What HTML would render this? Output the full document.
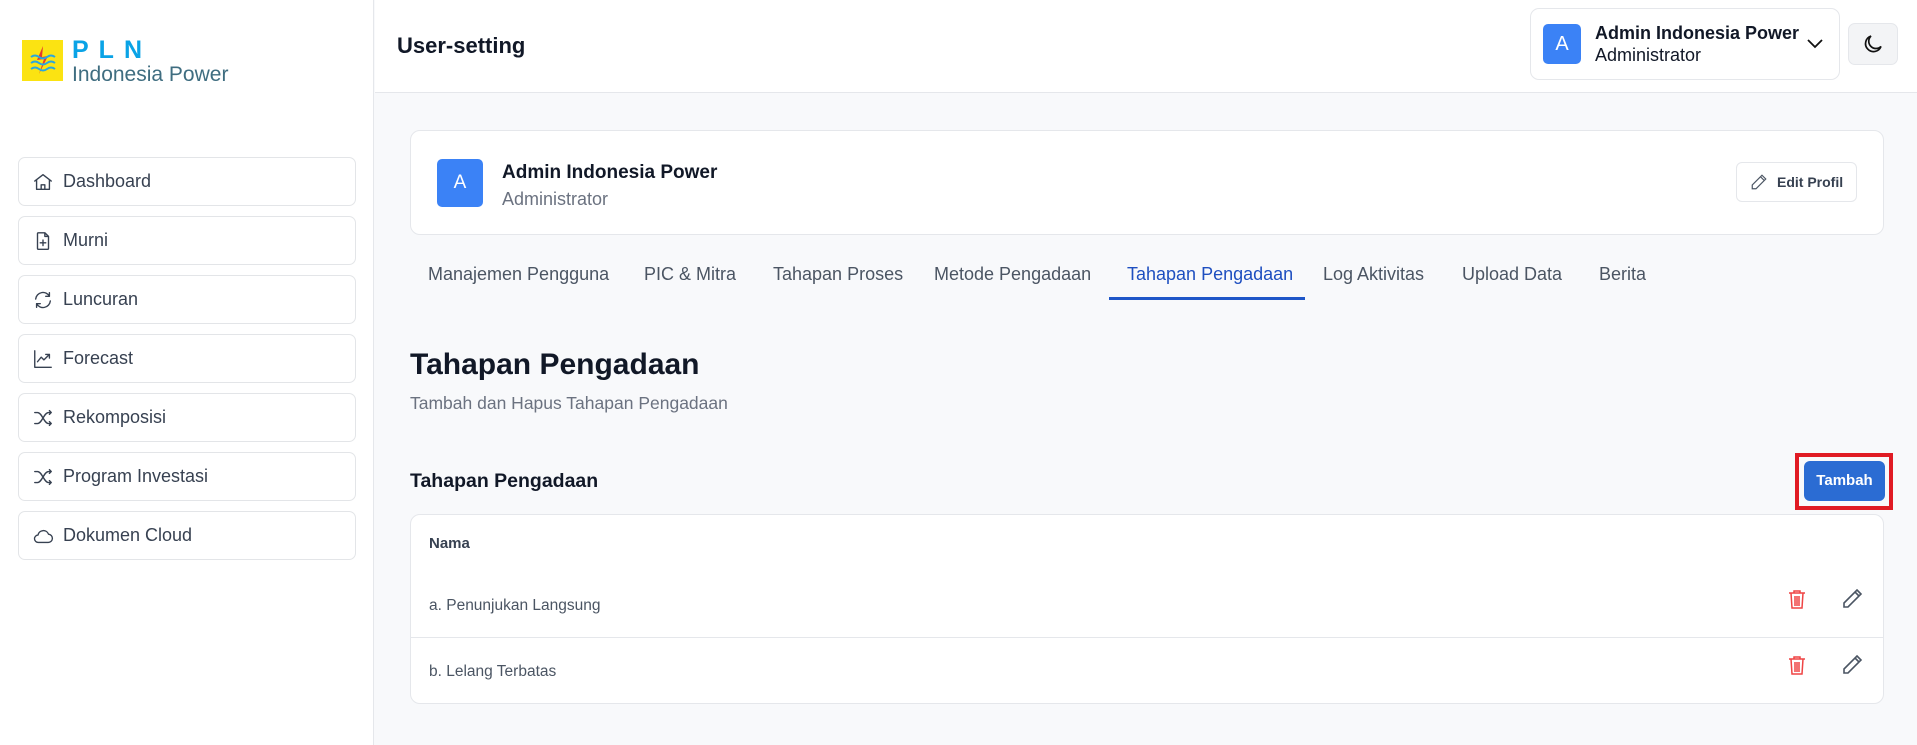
<!DOCTYPE html>
<html><head><meta charset="utf-8"><style>
*{box-sizing:border-box;margin:0;padding:0}
body{width:1917px;height:745px;overflow:hidden;background:#f8f9fb;font-family:"Liberation Sans",sans-serif;position:relative;color:#111827}
.a{position:absolute}
.side{left:0;top:0;width:374px;height:745px;background:#fff;border-right:1px solid #e5e7eb}
.nav{left:18px;width:338px;height:49px;border:1px solid #e3e5e8;border-radius:7px;background:#fff;font-size:18px;color:#374151;display:flex;align-items:center;padding-left:13px}
.nav svg{width:22px;height:22px;margin-right:9px;fill:none;stroke:#374151;stroke-width:1.5;stroke-linecap:round;stroke-linejoin:round}
.hdr{left:375px;top:0;right:0;height:93px;background:#fff;border-bottom:1px solid #e5e7eb}
.tab{top:264px;font-size:18px;color:#4b5563}
</style></head><body>
<div class="a side"></div>
<div class="a" style="left:22px;top:40px;width:41px;height:41px;background:#fbe312"></div>
<svg class="a" style="left:22px;top:40px" width="41" height="41" viewBox="0 0 41 41"><path d="M21 6 L15 20 L22 19 L17 34 L26 16 L20 17 Z" fill="#e53b2b"/><path d="M9 17q4-3 8 0t8 0t8 0M9 23q4-3 8 0t8 0t8 0M9 29q4-3 8 0t8 0t8 0" stroke="#29a7df" stroke-width="2" fill="none"/></svg>
<div class="a" style="left:72px;top:36px;font-size:25px;font-weight:bold;color:#0aa3e6;letter-spacing:10px">PLN</div>
<div class="a" style="left:72px;top:63px;font-size:21px;color:#3f6d80">Indonesia Power</div>

<div class="a nav" style="top:157px"><svg viewBox="0 0 24 24"><path d="M3 11l9-7 9 7M5 9.5V20h14V9.5M10 20v-5h4v5"/></svg>Dashboard</div>
<div class="a nav" style="top:216px"><svg viewBox="0 0 24 24"><path d="M14 3H7a1 1 0 0 0-1 1v16a1 1 0 0 0 1 1h10a1 1 0 0 0 1-1V7zM14 3v4h4M12 11v6M9 14h6"/></svg>Murni</div>
<div class="a nav" style="top:275px"><svg viewBox="0 0 24 24"><path d="M4 11a8 8 0 0 1 15-3M20 13a8 8 0 0 1-15 3M19 4v4h-4M5 20v-4h4"/></svg>Luncuran</div>
<div class="a nav" style="top:334px"><svg viewBox="0 0 24 24"><path d="M3 3v18h18M6 15l4-5 3 3 6-6M15 7h4v4"/></svg>Forecast</div>
<div class="a nav" style="top:393px"><svg viewBox="0 0 24 24"><path d="M3 6h3c5 0 7 12 12 12h3M3 18h3c5 0 7-12 12-12h3M19 4l2 2-2 2M19 16l2 2-2 2"/></svg>Rekomposisi</div>
<div class="a nav" style="top:452px"><svg viewBox="0 0 24 24"><path d="M3 6h3c5 0 7 12 12 12h3M3 18h3c5 0 7-12 12-12h3M19 4l2 2-2 2M19 16l2 2-2 2"/></svg>Program Investasi</div>
<div class="a nav" style="top:511px"><svg viewBox="0 0 24 24"><path d="M7 19a4 4 0 0 1-.5-8A6 6 0 0 1 18 10a4.5 4.5 0 0 1-.5 9z"/></svg>Dokumen Cloud</div>

<div class="a hdr"></div>
<div class="a" style="left:397px;top:33px;font-size:22px;font-weight:bold">User-setting</div>
<div class="a" style="left:1530px;top:8px;width:310px;height:72px;border:1px solid #e5e7eb;border-radius:9px;background:#fff"></div>
<div class="a" style="left:1543px;top:24px;width:38px;height:40px;border-radius:5px;background:#3b82f6;color:#fff;font-size:20px;text-align:center;line-height:40px">A</div>
<div class="a" style="left:1595px;top:23px;font-size:18px;font-weight:bold">Admin Indonesia Power</div>
<div class="a" style="left:1595px;top:45px;font-size:18px;color:#111827">Administrator</div>
<svg class="a" style="left:1805px;top:36px" width="20" height="14" viewBox="0 0 20 14"><path d="M3 4l7 7 7-7" stroke="#111" stroke-width="1.8" fill="none"/></svg>
<div class="a" style="left:1848px;top:23px;width:50px;height:42px;border:1px solid #e5e7eb;border-radius:7px;background:#f3f4f6"></div>
<svg class="a" style="left:1861px;top:32px" width="24" height="24" viewBox="0 0 24 24"><path d="M20 14.5A8 8 0 1 1 10 4a6.5 6.5 0 0 0 10 10.5z" stroke="#111" stroke-width="1.7" fill="none"/></svg>

<div class="a" style="left:410px;top:130px;width:1474px;height:105px;background:#fff;border:1px solid #e5e7eb;border-radius:10px"></div>
<div class="a" style="left:437px;top:159px;width:46px;height:48px;border-radius:5px;background:#3b82f6;color:#fff;font-size:19px;text-align:center;line-height:48px">A</div>
<div class="a" style="left:502px;top:162px;font-size:19px;font-weight:bold">Admin Indonesia Power</div>
<div class="a" style="left:502px;top:189px;font-size:18px;color:#6b7280">Administrator</div>
<div class="a" style="left:1736px;top:162px;width:121px;height:40px;border:1px solid #e5e7eb;border-radius:6px;background:#fff;font-size:14px;font-weight:bold;color:#374151;line-height:38px;padding-left:40px">Edit Profil</div>
<svg class="a" style="left:1750px;top:173px" width="18" height="18" viewBox="0 0 24 24"><path d="M16 3l5 5L8 21H3v-5zM14 5l5 5" stroke="#4b5563" stroke-width="1.6" fill="none"/></svg>

<div class="a tab" style="left:428px">Manajemen Pengguna</div>
<div class="a tab" style="left:644px">PIC &amp; Mitra</div>
<div class="a tab" style="left:773px">Tahapan Proses</div>
<div class="a tab" style="left:934px">Metode Pengadaan</div>
<div class="a tab" style="left:1127px;color:#1e4fc0">Tahapan Pengadaan</div>
<div class="a tab" style="left:1323px">Log Aktivitas</div>
<div class="a tab" style="left:1462px">Upload Data</div>
<div class="a tab" style="left:1599px">Berita</div>
<div class="a" style="left:1109px;top:297px;width:196px;height:3px;background:#1e56c8"></div>

<div class="a" style="left:410px;top:348px;font-size:30px;font-weight:bold">Tahapan Pengadaan</div>
<div class="a" style="left:410px;top:393px;font-size:17.5px;color:#6b7280">Tambah dan Hapus Tahapan Pengadaan</div>
<div class="a" style="left:410px;top:470px;font-size:19.5px;font-weight:bold">Tahapan Pengadaan</div>

<div class="a" style="left:1795px;top:453px;width:98px;height:57px;border:4px solid #e01b24"></div>
<div class="a" style="left:1804px;top:461px;width:81px;height:40px;background:#2b6cd3;border-radius:6px;color:#fff;font-size:15px;font-weight:bold;text-align:center;line-height:40px">Tambah</div>

<div class="a" style="left:410px;top:514px;width:1474px;height:190px;background:#fff;border:1px solid #e5e7eb;border-radius:10px"></div>
<div class="a" style="left:429px;top:535px;font-size:15px;font-weight:bold;color:#374151">Nama</div>
<div class="a" style="left:429px;top:597px;font-size:15.5px;color:#4b5563">a. Penunjukan Langsung</div>
<div class="a" style="left:411px;top:637px;width:1472px;height:1px;background:#e5e7eb"></div>
<div class="a" style="left:429px;top:663px;font-size:15.5px;color:#4b5563">b. Lelang Terbatas</div>
<svg class="a" style="left:1785px;top:587px" width="24" height="24" viewBox="0 0 24 24"><path d="M4 6h16M9 6V4h6v2M6 6l1 15h10l1-15M10 9v10M12 9v10M14 9v10" stroke="#ef4444" stroke-width="1.5" fill="none"/></svg>
<svg class="a" style="left:1785px;top:653px" width="24" height="24" viewBox="0 0 24 24"><path d="M4 6h16M9 6V4h6v2M6 6l1 15h10l1-15M10 9v10M12 9v10M14 9v10" stroke="#ef4444" stroke-width="1.5" fill="none"/></svg>
<svg class="a" style="left:1840px;top:587px" width="24" height="24" viewBox="0 0 24 24"><path d="M17 3l4 4L8 20H4v-4zM15 5l4 4" stroke="#4b5563" stroke-width="1.6" fill="none"/></svg>
<svg class="a" style="left:1840px;top:653px" width="24" height="24" viewBox="0 0 24 24"><path d="M17 3l4 4L8 20H4v-4zM15 5l4 4" stroke="#4b5563" stroke-width="1.6" fill="none"/></svg>
</body></html>
